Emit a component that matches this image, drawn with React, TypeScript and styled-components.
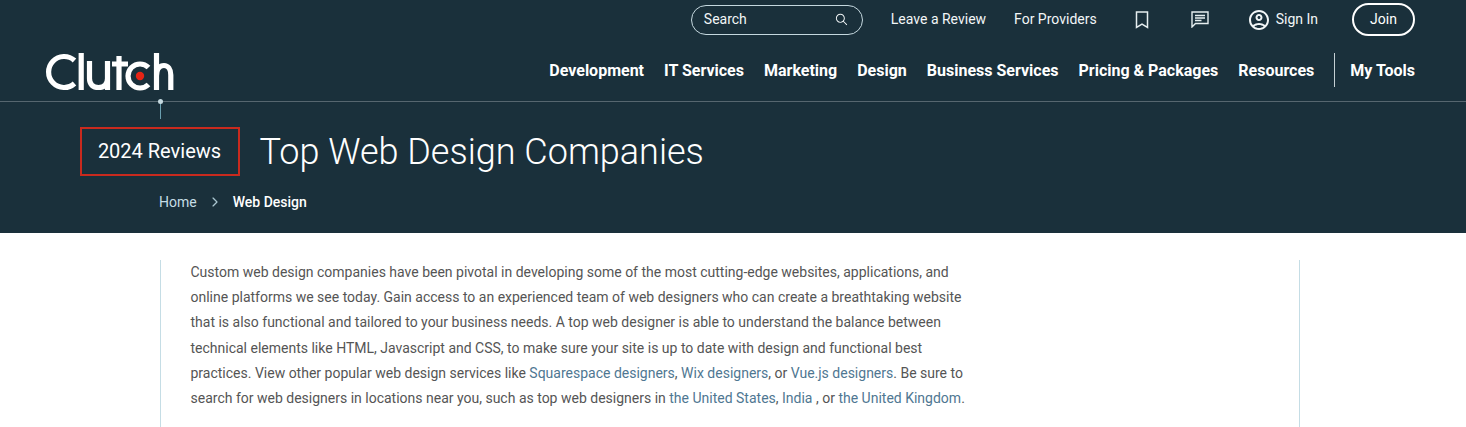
import styled, { createGlobalStyle } from 'styled-components';
import { MdOutlineAccountCircle } from 'react-icons/md';
import { IoIosArrowForward, IoIosSearch } from 'react-icons/io';

const utilityLinks = ['Leave a Review', 'For Providers'];
const navLinks = [
    'Development',
    'IT Services',
    'Marketing',
    'Design',
    'Business Services',
    'Pricing & Packages',
    'Resources',
];

const ClutchLogo = () => (
    <LogoSvg viewBox="0 0 130 40" aria-label="Clutch">
        <g fill="none" stroke="#fff" strokeWidth="5.200">
            <path d="M29.500 8.500A15.500 15.500 0 1 0 29.500 31.500" />
            <path d="M36.200 1V38" />
            <path d="M44.500 9V26.500C44.500 32.500 48 35.500 53.500 35.500C59 35.500 62.500 32.500 62.500 26.500M62.500 9V38" />
            <path d="M74 4V38M67 12H83" />
            <path d="M103.500 15.500A12 12 0 1 0 103.500 32.500" />
            <path d="M111.500 1V38M111.500 24C111.500 16.500 115 13.500 119 13.500C123 13.500 125.800 17 125.800 23V38" />
        </g>
        <circle cx="95" cy="24" r="4.200" fill="#e62415" />
    </LogoSvg>
);

const App = () => (
    <>
        <GlobalStyle />
        <Header>
            <TopBar>
                <SearchBox>
                    <TopLabel>Search</TopLabel>
                    <IoIosSearch size={15} />
                </SearchBox>
                {utilityLinks.map((link) => (
                    <UtilityLink key={link}>
                        <TopLabel>{link}</TopLabel>
                    </UtilityLink>
                ))}
                <BookmarkIcon viewBox="0 0 14 18">
                    <path d="M1.500 1H12.500V16.500L7 13.200L1.500 16.500Z" />
                </BookmarkIcon>
                <MessageIcon viewBox="0 0 18 17">
                    <path d="M1 1H17V12.500H4.500L1 16Z" />
                    <path d="M4 4.500H14M4 7H14M4 9.500H10.500" />
                </MessageIcon>
                <SignIn>
                    <MdOutlineAccountCircle size={24} />
                    <TopLabel>Sign In</TopLabel>
                </SignIn>
                <JoinButton>Join</JoinButton>
            </TopBar>
            <MainBar>
                <ClutchLogo />
                <Nav>
                    {navLinks.map((link) => (
                        <NavLink key={link}>{link}</NavLink>
                    ))}
                    <NavDivider />
                    <NavLink>My Tools</NavLink>
                </Nav>
            </MainBar>
            <Hero>
                <Pin />
                <TitleRow>
                    <Badge>2024 Reviews</Badge>
                    <Title>Top Web Design Companies</Title>
                </TitleRow>
                <Breadcrumbs>
                    <Crumb>Home</Crumb>
                    <IoIosArrowForward size={14} />
                    <CurrentCrumb>Web Design</CurrentCrumb>
                </Breadcrumbs>
            </Hero>
        </Header>
        <Content>
            <Intro>
                Custom web design companies have been pivotal in developing some of the most
                cutting-edge websites, applications, and online platforms we see today. Gain access
                to an experienced team of web designers who can create a breathtaking website that
                is also functional and tailored to your business needs. A top web designer is able
                to understand the balance between technical elements like HTML, Javascript and CSS,
                to make sure your site is up to date with design and functional best practices. View
                other popular web design services like <TextLink>Squarespace designers</TextLink>,{' '}
                <TextLink>Wix designers</TextLink>, or <TextLink>Vue.js designers</TextLink>. Be
                sure to search for web designers in locations near you, such as top web designers in{' '}
                <TextLink>the United States</TextLink>, <TextLink>India</TextLink> , or{' '}
                <TextLink>the United Kingdom</TextLink>.
            </Intro>
        </Content>
    </>
);

export default App;

// STYLES

const GlobalStyle = createGlobalStyle`
    html, body {
        margin: 0;
        height: 427px;
        overflow: hidden;
        background: #fff;
        font-family: Roboto, "Liberation Sans", sans-serif;
    }
`;

const Header = styled.header`
    height: 233px;
    background: #1a303b;
    color: #fff;
`;

const TopBar = styled.div`
    height: 39px;
    padding-right: 51px;
    display: flex;
    align-items: center;
    justify-content: flex-end;
`;

const TopLabel = styled.span`
    margin-bottom: 2px;
`;

const SearchBox = styled.div`
    box-sizing: border-box;
    width: 172px;
    height: 30px;
    margin-right: 28px;
    padding: 0 13px 0 12px;
    display: flex;
    align-items: center;
    justify-content: space-between;
    border: 1px solid #c5d8df;
    border-radius: 15px;
    font-size: 14px;
    color: #f2f6f7;
`;

const UtilityLink = styled.a`
    display: flex;
    margin-right: 28px;
    font-size: 14px;
    color: #f2f6f7;

    &:nth-of-type(2) {
        margin-right: 38px;
    }
`;

const BookmarkIcon = styled.svg`
    width: 14px;
    height: 18px;
    margin-right: 42px;
    fill: none;
    stroke: #e6eef0;
    stroke-width: 1.5;
`;

const MessageIcon = styled.svg`
    width: 18px;
    height: 17px;
    margin-right: 38px;
    fill: none;
    stroke: #e6eef0;
    stroke-width: 1.4;
`;

const SignIn = styled.a`
    display: flex;
    align-items: center;
    gap: 5px;
    margin-right: 34px;
    font-size: 14px;
    color: #f2f6f7;
`;

const JoinButton = styled.a`
    box-sizing: border-box;
    width: 63px;
    height: 33px;
    padding-bottom: 1px;
    display: flex;
    align-items: center;
    justify-content: center;
    border: 2px solid #fff;
    border-radius: 17px;
    font-size: 14px;
`;

const MainBar = styled.div`
    box-sizing: border-box;
    height: 63px;
    padding: 0 51px 0 45px;
    display: flex;
    align-items: center;
    justify-content: space-between;
    border-bottom: 1px solid #56666f;
`;

const LogoSvg = styled.svg`
    width: 130px;
    height: 40px;
    margin-top: 3px;
`;

const Nav = styled.nav`
    display: flex;
    align-items: center;
    gap: 20px;
`;

const NavLink = styled.a`
    font-size: 16px;
    font-weight: 700;
`;

const NavDivider = styled.span`
    width: 1px;
    height: 34px;
    margin-right: -5px;
    background: #c5d0d4;
`;

const Hero = styled.div`
    position: relative;
    padding: 25px 0 0 80px;
`;

const Pin = styled.span`
    position: absolute;
    left: 160px;
    top: -3px;
    width: 1px;
    height: 20px;
    background: #6a9fb0;

    &::before {
        content: '';
        position: absolute;
        left: -2px;
        top: 0;
        width: 5px;
        height: 5px;
        border-radius: 50%;
        background: #c5d8df;
    }
`;

const TitleRow = styled.div`
    display: flex;
    align-items: center;
    gap: 19.5px;
`;

const Badge = styled.div`
    box-sizing: border-box;
    width: 160px;
    height: 49px;
    padding: 0 1px 2px 0;
    display: flex;
    align-items: center;
    justify-content: center;
    border: 2px solid #c92a1e;
    font-size: 20px;
`;

const Title = styled.h1`
    margin: 0;
    font-size: 36px;
    font-weight: 300;
`;

const Breadcrumbs = styled.div`
    margin: 18px 0 0 79px;
    display: flex;
    align-items: center;
    gap: 11px;
    font-size: 14px;
    color: #a9c5cf;
`;

const Crumb = styled.a`
    color: #c5dde5;
`;

const CurrentCrumb = styled.span`
    font-weight: 500;
    color: #fff;
`;

const Content = styled.main`
    box-sizing: border-box;
    width: 1140px;
    height: 167px;
    margin: 27px 0 0 160px;
    padding: 0 324px 0 29.5px;
    border-left: 1px solid #c5dde5;
    border-right: 1px solid #c5dde5;
`;

const Intro = styled.p`
    margin: 0;
    font-size: 14px;
    line-height: 25.2px;
    color: #555;
`;

const TextLink = styled.a`
    color: #4f7792;
`;
